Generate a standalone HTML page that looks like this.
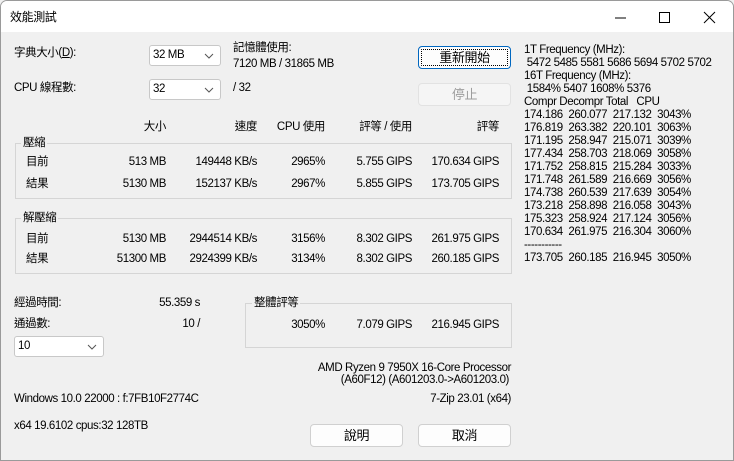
<!DOCTYPE html>
<html><head><meta charset="utf-8"><style>
*{margin:0;padding:0;box-sizing:border-box}
body{width:734px;height:461px;overflow:hidden;background:#f0f0f0;font-family:"Liberation Sans","Noto Sans CJK TC",sans-serif;font-size:11.5px;letter-spacing:-0.4px;color:#000;position:relative}
.win{position:absolute;left:0;top:0;width:734px;height:461px;border:1px solid #9a9a9a;border-radius:7px 7px 0 0;background:#f0f0f0;overflow:hidden}
.tb{position:absolute;left:0;top:0;width:100%;height:31px;background:#fff}
.t{position:absolute;white-space:nowrap;line-height:14px}
.r{text-align:right}
.combo{position:absolute;background:#fff;border:1px solid #c8c8c8;border-radius:3px;height:21px;padding-left:3px;line-height:19px}
.combo svg{position:absolute;right:6px;top:7px}
.btn{position:absolute;background:#fdfdfd;border:1px solid #d0d0d0;border-radius:4px;height:23px;text-align:center;line-height:21px;font-size:13px}
.gb{position:absolute;border:1px solid #d5d5d5}
.gl{position:absolute;background:#f0f0f0;padding:0 2px;line-height:14px}
.mono{position:absolute;left:523px;top:43px;line-height:13px;white-space:pre}
</style></head><body><div class="win">
<div class="tb"></div>
<div class="t" style="left:9px;top:9px;font-size:12px">效能測試</div>
<svg style="position:absolute;left:612px;top:9px" width="16" height="16"><line x1="2" y1="8" x2="13" y2="8" stroke="#000" stroke-width="1"/></svg>
<svg style="position:absolute;left:656px;top:9px" width="16" height="16"><rect x="2.5" y="2.5" width="10" height="10" fill="none" stroke="#000"/></svg>
<svg style="position:absolute;left:701px;top:9px" width="16" height="16"><path d="M2 2L13 13M13 2L2 13" stroke="#000"/></svg>

<div class="t" style="left:13px;top:45px">字典大小(<u>D</u>):</div>
<div class="combo" style="left:148px;top:44px;width:72px">32 MB<svg width="10" height="6"><path d="M1 1L5 5L9 1" fill="none" stroke="#555"/></svg></div>
<div class="t" style="left:232px;top:40px">記憶體使用:</div>
<div class="t" style="left:232px;top:56px">7120 MB / 31865 MB</div>
<div class="t" style="left:13px;top:80px">CPU 線程數:</div>
<div class="combo" style="left:148px;top:78px;width:72px">32<svg width="10" height="6"><path d="M1 1L5 5L9 1" fill="none" stroke="#555"/></svg></div>
<div class="t" style="left:232px;top:80px">/ 32</div>
<div class="btn" style="left:417px;top:45px;width:93px;border:1px solid #0067c0;outline:1px dotted #000;outline-offset:-4px">重新開始</div>
<div class="btn" style="left:417px;top:82px;width:93px;color:#9d9d9d;background:#f5f5f5;border-color:#e2e2e2">停止</div>

<div class="mono">1T Frequency (MHz):
 5472 5485 5581 5686 5694 5702 5702
16T Frequency (MHz):
 1584% 5407 1608% 5376
Compr Decompr Total   CPU
174.186  260.077  217.132  3043%
176.819  263.382  220.101  3063%
171.195  258.947  215.071  3039%
177.434  258.703  218.069  3058%
171.752  258.815  215.284  3033%
171.748  261.589  216.669  3056%
174.738  260.539  217.639  3054%
173.218  258.898  216.058  3043%
175.323  258.924  217.124  3056%
170.634  261.975  216.304  3060%
-----------
173.705  260.185  216.945  3050%</div>

<div class="t r" style="left:100px;width:65px;top:119px">大小</div>
<div class="t r" style="left:180px;width:76px;top:119px">速度</div>
<div class="t r" style="left:250px;width:74px;top:119px">CPU 使用</div>
<div class="t r" style="left:330px;width:81px;top:119px">評等 / 使用</div>
<div class="t r" style="left:420px;width:78px;top:119px">評等</div>

<div class="gb" style="left:14px;top:142px;width:497px;height:56px"></div>
<div class="gl" style="left:20px;top:135px">壓縮</div>
<div class="t" style="left:25px;top:154px">目前</div>
<div class="t r" style="left:90px;width:75px;top:154px">513 MB</div>
<div class="t r" style="left:160px;width:96px;top:154px">149448 KB/s</div>
<div class="t r" style="left:260px;width:64px;top:154px">2965%</div>
<div class="t r" style="left:330px;width:81px;top:154px">5.755 GIPS</div>
<div class="t r" style="left:410px;width:88px;top:154px">170.634 GIPS</div>
<div class="t" style="left:25px;top:176px">結果</div>
<div class="t r" style="left:90px;width:75px;top:176px">5130 MB</div>
<div class="t r" style="left:160px;width:96px;top:176px">152137 KB/s</div>
<div class="t r" style="left:260px;width:64px;top:176px">2967%</div>
<div class="t r" style="left:330px;width:81px;top:176px">5.855 GIPS</div>
<div class="t r" style="left:410px;width:88px;top:176px">173.705 GIPS</div>

<div class="gb" style="left:14px;top:217px;width:497px;height:56px"></div>
<div class="gl" style="left:20px;top:210px">解壓縮</div>
<div class="t" style="left:25px;top:231px">目前</div>
<div class="t r" style="left:90px;width:75px;top:231px">5130 MB</div>
<div class="t r" style="left:160px;width:96px;top:231px">2944514 KB/s</div>
<div class="t r" style="left:260px;width:64px;top:231px">3156%</div>
<div class="t r" style="left:330px;width:81px;top:231px">8.302 GIPS</div>
<div class="t r" style="left:410px;width:88px;top:231px">261.975 GIPS</div>
<div class="t" style="left:25px;top:251px">結果</div>
<div class="t r" style="left:90px;width:75px;top:251px">51300 MB</div>
<div class="t r" style="left:160px;width:96px;top:251px">2924399 KB/s</div>
<div class="t r" style="left:260px;width:64px;top:251px">3134%</div>
<div class="t r" style="left:330px;width:81px;top:251px">8.302 GIPS</div>
<div class="t r" style="left:410px;width:88px;top:251px">260.185 GIPS</div>

<div class="t" style="left:13px;top:295px">經過時間:</div>
<div class="t r" style="left:120px;width:79px;top:295px">55.359 s</div>
<div class="t" style="left:13px;top:316px">通過數:</div>
<div class="t r" style="left:120px;width:79px;top:316px">10 /</div>
<div class="combo" style="left:13px;top:335px;width:90px">10<svg width="10" height="6"><path d="M1 1L5 5L9 1" fill="none" stroke="#555"/></svg></div>

<div class="gb" style="left:244px;top:302px;width:267px;height:45px"></div>
<div class="gl" style="left:251px;top:295px">整體評等</div>
<div class="t r" style="left:260px;width:64px;top:317px">3050%</div>
<div class="t r" style="left:330px;width:81px;top:317px">7.079 GIPS</div>
<div class="t r" style="left:410px;width:88px;top:317px">216.945 GIPS</div>

<div class="t r" style="left:250px;width:260px;top:360px">AMD Ryzen 9 7950X 16-Core Processor</div>
<div class="t r" style="left:250px;width:258px;top:372px">(A60F12) (A601203.0-&gt;A601203.0)</div>
<div class="t r" style="left:250px;width:260px;top:391px">7-Zip 23.01 (x64)</div>
<div class="t" style="left:13px;top:391px">Windows 10.0 22000 : f:7FB10F2774C</div>
<div class="t" style="left:13px;top:418px">x64 19.6102 cpus:32 128TB</div>
<div class="btn" style="left:309px;top:423px;width:93px">說明</div>
<div class="btn" style="left:417px;top:423px;width:93px">取消</div>
</div></body></html>
